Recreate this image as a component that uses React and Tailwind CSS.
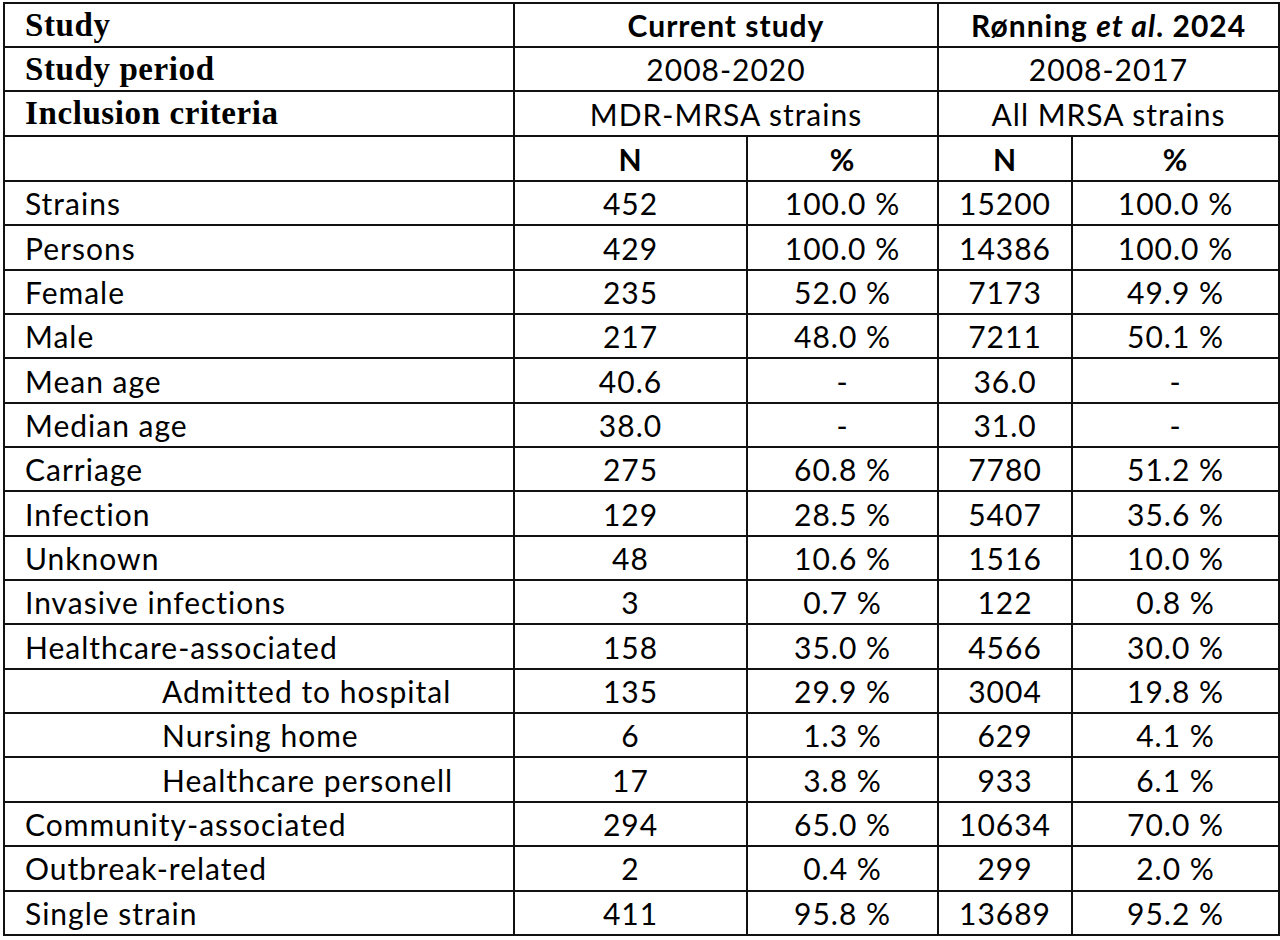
import React from "react";

const rows = [
  ["Strains", "452", "100.0 %", "15200", "100.0 %"],
  ["Persons", "429", "100.0 %", "14386", "100.0 %"],
  ["Female", "235", "52.0 %", "7173", "49.9 %"],
  ["Male", "217", "48.0 %", "7211", "50.1 %"],
  ["Mean age", "40.6", "-", "36.0", "-"],
  ["Median age", "38.0", "-", "31.0", "-"],
  ["Carriage", "275", "60.8 %", "7780", "51.2 %"],
  ["Infection", "129", "28.5 %", "5407", "35.6 %"],
  ["Unknown", "48", "10.6 %", "1516", "10.0 %"],
  ["Invasive infections", "3", "0.7 %", "122", "0.8 %"],
  ["Healthcare-associated", "158", "35.0 %", "4566", "30.0 %"],
  ["Admitted to hospital", "135", "29.9 %", "3004", "19.8 %", true],
  ["Nursing home", "6", "1.3 %", "629", "4.1 %", true],
  ["Healthcare personell", "17", "3.8 %", "933", "6.1 %", true],
  ["Community-associated", "294", "65.0 %", "10634", "70.0 %"],
  ["Outbreak-related", "2", "0.4 %", "299", "2.0 %"],
  ["Single strain", "411", "95.8 %", "13689", "95.2 %"],
];

const cell = "border-2 border-[#111] p-0 align-middle";
const sans = "font-['Lato','Liberation_Sans',sans-serif]";
const serif = "font-['Liberation_Serif','Times_New_Roman',serif] font-bold text-[33px] tracking-[0.6px] leading-none text-left pl-[20px]";

export default function App() {
  return (
    <div className="w-[1280px] h-[940px] bg-white pt-[2px] pl-[3px] text-black">
      <table className={`border-collapse table-fixed w-[1275px] ${sans} text-[30px] tracking-[1px] leading-none`}>
        <colgroup>
          <col className="w-[510px]" />
          <col className="w-[233px]" />
          <col className="w-[191px]" />
          <col className="w-[134px]" />
          <col className="w-[207px]" />
        </colgroup>
        <tbody>
          <tr className="h-[44px]">
            <td className={`${cell} ${serif}`}>Study</td>
            <td colSpan={2} className={`${cell} text-center font-bold`}>Current study</td>
            <td colSpan={2} className={`${cell} text-center font-bold`}>
              Rønning <span className="italic">et al</span>. 2024
            </td>
          </tr>
          <tr className="h-[44px]">
            <td className={`${cell} ${serif}`}>Study period</td>
            <td colSpan={2} className={`${cell} text-center`}>2008-2020</td>
            <td colSpan={2} className={`${cell} text-center`}>2008-2017</td>
          </tr>
          <tr className="h-[45px]">
            <td className={`${cell} ${serif}`}>Inclusion criteria</td>
            <td colSpan={2} className={`${cell} text-center`}>MDR-MRSA strains</td>
            <td colSpan={2} className={`${cell} text-center`}>All MRSA strains</td>
          </tr>
          <tr className="h-[45px]">
            <td className={cell}></td>
            <td className={`${cell} text-center font-bold`}>N</td>
            <td className={`${cell} text-center font-bold`}>%</td>
            <td className={`${cell} text-center font-bold`}>N</td>
            <td className={`${cell} text-center font-bold`}>%</td>
          </tr>
          {rows.map((r) => (
            <tr key={r[0]} className="h-[44.35px]">
              <td className={`${cell} ${r[5] ? "pl-[157px]" : "pl-[20px]"} text-left`}>{r[0]}</td>
              <td className={`${cell} text-center`}>{r[1]}</td>
              <td className={`${cell} text-center`}>{r[2]}</td>
              <td className={`${cell} text-center`}>{r[3]}</td>
              <td className={`${cell} text-center`}>{r[4]}</td>
            </tr>
          ))}
        </tbody>
      </table>
    </div>
  );
}
